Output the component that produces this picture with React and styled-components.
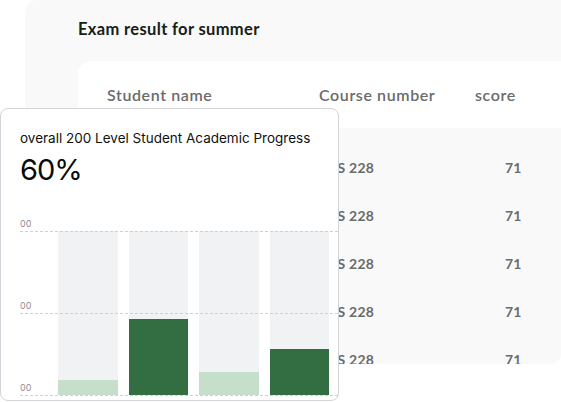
import React from "react";
import styled, { createGlobalStyle } from "styled-components";

const Global = createGlobalStyle`
  html, body { margin: 0; padding: 0; background: #ffffff; }
  body { font-family: "Lato", "Noto Sans", sans-serif; }
  * { box-sizing: border-box; }
`;

const Stage = styled.div`
  position: relative;
  width: 561px;
  height: 402px;
  overflow: hidden;
  background: #ffffff;
`;

const Panel = styled.section`
  margin-left: 25px;
  width: 536px;
  height: 364px;
  background: #f9f9f9;
  border-radius: 12px 0 10px 0;
  padding: 19px 0 0 53px;
  overflow: hidden;
  display: flex;
  flex-direction: column;
`;

const PanelTitle = styled.h2`
  margin: 0;
  flex-shrink: 0;
  font-family: "Lato", sans-serif;
  font-weight: 700;
  font-size: 16.5px;
  letter-spacing: 0.35px;
  line-height: 20px;
  color: #14201a;
`;

const TableHead = styled.div`
  flex-shrink: 0;
  margin-top: 22px;
  height: 67px;
  background: #ffffff;
  border-radius: 14px 0 0 0;
  display: grid;
  grid-template-columns: 212px 156px 1fr;
  align-items: center;
  padding-left: 29px;
`;

const HeadCell = styled.div`
  font-size: 16px;
  font-weight: 600;
  letter-spacing: 0.6px;
  color: #6b6b6b;
`;

const Rows = styled.div`
  flex-shrink: 0;
  padding-top: 15px;
  display: flex;
  flex-direction: column;
`;

const Row = styled.div`
  height: 48px;
  flex-shrink: 0;
  display: grid;
  grid-template-columns: 212px 156px 1fr;
  align-items: center;
  padding-left: 29px;
`;

const Cell = styled.div`
  font-size: 14px;
  font-weight: 700;
  letter-spacing: 0.2px;
  color: #6b6b6b;
  padding-left: ${(p) => p.$pad || 0}px;
`;

const Card = styled.div`
  position: absolute;
  left: 0;
  top: 108px;
  width: 339px;
  height: 293px;
  background: #ffffff;
  border: 1px solid #d3d3da;
  border-radius: 8px;
  font-family: "Inter", sans-serif;
  padding: 20px 0 0 19px;
  display: flex;
  flex-direction: column;
`;

const CardTitle = styled.div`
  font-size: 13.5px;
  line-height: 18px;
  color: #111111;
`;

const Big = styled.div`
  margin-top: 6px;
  font-size: 29px;
  letter-spacing: -1px;
  line-height: 34px;
  color: #0a0a0a;
`;

const Chart = styled.div`
  position: relative;
  margin-top: 30px;
  height: 178px;
`;

const GridLine = styled.div`
  position: absolute;
  left: 0;
  right: 0;
  top: ${(p) => p.$top}px;
  border-top: 1px dashed #cfcfd6;
  z-index: 2;
`;

const GridLabel = styled.div`
  position: absolute;
  left: 0;
  top: ${(p) => p.$top}px;
  font-size: 9px;
  line-height: 10px;
  color: #8e8e98;
`;

const Bars = styled.div`
  position: absolute;
  left: 38px;
  top: 14px;
  width: 271px;
  height: 164px;
  display: grid;
  grid-template-columns: repeat(4, 1fr);
  column-gap: 11px;
`;

const Bar = styled.div`
  background: #f1f2f4;
  display: flex;
  flex-direction: column;
  justify-content: flex-end;
`;

const Fill = styled.div`
  background: ${(p) => (p.$dark ? "#336e42" : "#c6dfcc")};
`;

const rows = [
  { name: "Ada Okafor", course: "GES 228", score: 71 },
  { name: "Bayo Adeyemi", course: "GES 228", score: 71 },
  { name: "Chidi Eze", course: "GES 228", score: 71 },
  { name: "Dami Bello", course: "GES 228", score: 71 },
  { name: "Efe Musa", course: "GES 228", score: 71 },
];

const bars = [
  { h: 15, dark: false },
  { h: 76, dark: true },
  { h: 23, dark: false },
  { h: 46, dark: true },
];

export default function App() {
  return (
    <>
      <Global />
      <Stage>
        <Panel>
          <PanelTitle>Exam result for summer</PanelTitle>
          <TableHead>
            <HeadCell>Student name</HeadCell>
            <HeadCell>Course number</HeadCell>
            <HeadCell>score</HeadCell>
          </TableHead>
          <Rows>
            {rows.map((r, i) => (
              <Row key={i}>
                <Cell>{r.name}</Cell>
                <Cell>{r.course}</Cell>
                <Cell $pad={30}>{r.score}</Cell>
              </Row>
            ))}
          </Rows>
        </Panel>
        <Card>
          <CardTitle>overall 200 Level Student Academic Progress</CardTitle>
          <Big>60%</Big>
          <Chart>
            <GridLabel $top={2}>00</GridLabel>
            <GridLabel $top={84}>00</GridLabel>
            <GridLabel $top={166}>00</GridLabel>
            <GridLine $top={14} />
            <GridLine $top={96} />
            <GridLine $top={178} />
            <Bars>
              {bars.map((b, i) => (
                <Bar key={i}>
                  <Fill $dark={b.dark} style={{ height: `${b.h}px` }} />
                </Bar>
              ))}
            </Bars>
          </Chart>
        </Card>
      </Stage>
    </>
  );
}
